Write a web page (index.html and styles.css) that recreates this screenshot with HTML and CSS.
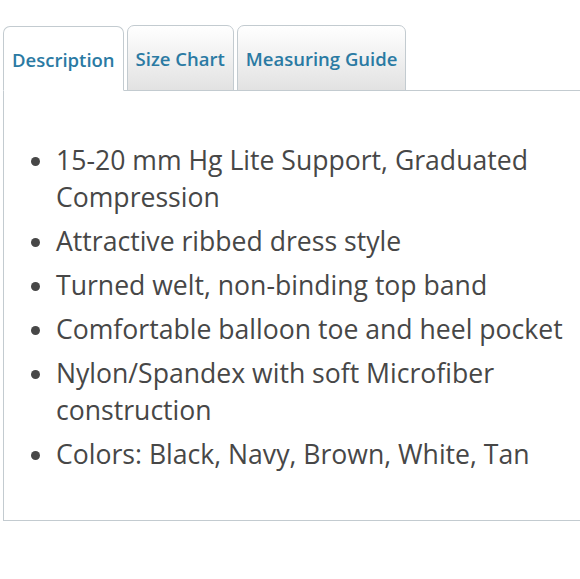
FILE: index.html
```html
<!DOCTYPE html>
<html lang="en">
<head>
<meta charset="utf-8">
<title>Description</title>
<link rel="stylesheet" href="styles.css">
</head>
<body>
<div class="page">
  <div class="tabs">
    <div class="tab active">Description</div>
    <div class="tab">Size Chart</div>
    <div class="tab">Measuring Guide</div>
  </div>
  <div class="panel">
    <ul class="features">
      <li>15-20 mm Hg Lite Support, Graduated Compression</li>
      <li>Attractive ribbed dress style</li>
      <li>Turned welt, non-binding top band</li>
      <li>Comfortable balloon toe and heel pocket</li>
      <li>Nylon/Spandex with soft Microfiber construction</li>
      <li>Colors: Black, Navy, Brown, White, Tan</li>
    </ul>
  </div>
</div>
</body>
</html>
```
FILE: styles.css
```css
html, body {
  margin: 0;
  padding: 0;
  background: #ffffff;
  overflow: hidden;
}
.page {
  width: 620px;
  padding: 25px 0 0 3px;
  font-family: "Open Sans", "DejaVu Sans", sans-serif;
}
.tabs {
  display: flex;
  align-items: flex-end;
  gap: 3px;
  border-bottom: 1px solid #c3cbd0;
  height: 65px;
}
.tab {
  box-sizing: border-box;
  height: 66px;
  margin-bottom: -1px;
  padding: 0 8px;
  display: flex;
  align-items: center;
  border: 1px solid #c3cbd0;
  border-radius: 7px 7px 0 0;
  background: linear-gradient(#ffffff, #e2e2e2);
  color: #2a7aa3;
  font-size: 18.5px;
  font-weight: 600;
}
.tab.active {
  height: 65px;
  margin-bottom: -1px;
  background: #ffffff;
  border-bottom: 1px solid #ffffff;
  padding-top: 2px;
}
.panel {
  border: 1px solid #c3cbd0;
  border-top: none;
  height: 430px;
  box-sizing: border-box;
}
.features {
  margin: 0;
  padding: 51px 0 0 52px;
  width: 525px;
  color: #474747;
  font-size: 26.6px;
  line-height: 37px;
}
.features li {
  margin-bottom: 7px;
}
```
